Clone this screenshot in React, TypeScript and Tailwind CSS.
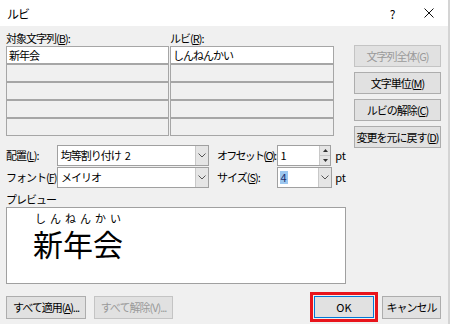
import React from "react";

function U({ c }: { c: string }) {
  return <span className="underline underline-offset-[1px]">{c}</span>;
}

function Btn({
  children,
  disabled,
  className = "",
}: {
  children: React.ReactNode;
  disabled?: boolean;
  className?: string;
}) {
  return (
    <div
      className={`h-[22px] flex items-center justify-center border whitespace-nowrap ${
        disabled
          ? "border-[#c4c4c4] bg-[#e1e1e1] text-[#9a9a9a]"
          : "border-[#adadad] bg-[#e1e1e1] text-black"
      } ${className}`}
    >
      {children}
    </div>
  );
}

function Chevron() {
  return (
    <svg width="8" height="5" viewBox="0 0 8 5">
      <polyline points="0.5,0.5 4,4 7.5,0.5" fill="none" stroke="#555" strokeWidth="1" />
    </svg>
  );
}

function Select({ children, w }: { children: React.ReactNode; w: string }) {
  return (
    <div className={`${w} h-[21px] flex items-stretch border border-[#a0a0a0] bg-white`}>
      <div className="flex-1 flex items-center pl-[3px]">{children}</div>
      <div className="w-[13px] flex items-center justify-center bg-[#e5e5e5] border-l border-[#c8c8c8]">
        <Chevron />
      </div>
    </div>
  );
}

export default function App() {
  const rowsL = ["新年会", "", "", "", ""];
  const rowsR = ["しんねんかい", "", "", "", ""];
  return (
    <div className="w-[450px] h-[324px] bg-[#f0f0f0] flex flex-col overflow-hidden border-r-2 border-[#d4d4d4] font-['Noto_Sans_CJK_JP',sans-serif] text-[11px] leading-[15px] tracking-[-1px] whitespace-nowrap text-black">
      {/* title bar */}
      <div className="h-[26px] bg-white flex items-center pl-[7px] shrink-0">
        <span className="text-[12px]">ルビ</span>
        <span className="ml-auto text-[12px] w-[10px] mr-[27px] text-center">?</span>
        <svg width="10" height="10" viewBox="0 0 10 10" className="mr-[14px]">
          <path d="M0.5 0.5 L9.5 9.5 M9.5 0.5 L0.5 9.5" stroke="#111" strokeWidth="1" />
        </svg>
      </div>

      {/* body */}
      <div className="flex px-[6px]">
        <div className="w-[340px] flex flex-col">
          <div className="mt-[5px] h-[15px] flex">
            <div className="w-[164px]">
              対象文字列(<U c="B" />):
            </div>
            <div>
              ルビ(<U c="R" />):
            </div>
          </div>
          <div className="grid grid-cols-[163px_164px] gap-x-[1px] w-[328px]">
            {rowsL.map((l, i) => (
              <React.Fragment key={i}>
                <div
                  className={`h-[18px] border border-[#a6a6a6] flex items-center pl-[2px] ${
                    i === 0 ? "bg-white" : "bg-[#f0f0f0]"
                  }`}
                >
                  {l}
                </div>
                <div
                  className={`h-[18px] border border-[#a6a6a6] flex items-center pl-[2px] ${
                    i === 0 ? "bg-white" : "bg-[#f0f0f0]"
                  }`}
                >
                  {rowsR[i]}
                </div>
              </React.Fragment>
            ))}
          </div>

          {/* controls */}
          <div className="mt-[9px] flex items-center h-[21px]">
            <div className="w-[51px]">
              配置(<U c="L" />):
            </div>
            <Select w="w-[153px]">
              均等割り付け<span className="ml-[4px]">2</span>
            </Select>
            <div className="ml-[8px] w-[60px] overflow-hidden tracking-[-1.7px]">
              オフセット(<U c="O" />):
            </div>
            <div className="w-[55px] h-[21px] flex items-stretch border border-[#a0a0a0] bg-white">
              <div className="flex-1 flex items-center pl-[3px]">1</div>
              <div className="w-[11px] flex flex-col border-l border-[#c8c8c8] bg-[#e5e5e5]">
                <div className="flex-1 flex items-center justify-center border-b border-[#c8c8c8]">
                  <svg width="5" height="3" viewBox="0 0 5 3">
                    <polygon points="0,3 2.5,0 5,3" fill="#333" />
                  </svg>
                </div>
                <div className="flex-1 flex items-center justify-center">
                  <svg width="5" height="3" viewBox="0 0 5 3">
                    <polygon points="0,0 2.5,3 5,0" fill="#333" />
                  </svg>
                </div>
              </div>
            </div>
            <div className="ml-[4px] tracking-normal">pt</div>
          </div>
          <div className="mt-[1px] flex items-center h-[21px]">
            <div className="w-[51px]">
              フォント(<U c="F" />):
            </div>
            <Select w="w-[153px]">メイリオ</Select>
            <div className="ml-[8px] w-[60px]">
              サイズ(<U c="S" />):
            </div>
            <div className="w-[56px] h-[21px] flex items-stretch border border-[#a0a0a0] bg-white">
              <div className="flex-1 flex items-center pl-[2px]">
                <span className="bg-[#9cc7f0] text-[#1a2a6a] px-[1px] leading-[13px] tracking-normal">4</span>
              </div>
              <div className="w-[13px] flex items-center justify-center bg-[#e5e5e5] border-l border-[#c8c8c8]">
                <Chevron />
              </div>
            </div>
            <div className="ml-[3px] tracking-normal">pt</div>
          </div>

          <div className="mt-[4px] h-[15px]">プレビュー</div>
          <div className="h-[77px] bg-white border border-[#a0a0a0] pl-[26px] pt-[3px] tracking-normal">
            <div className="inline-flex flex-col w-[90px]">
              <div className="flex justify-between px-[2px] text-[11px] leading-[13px]">
                <span>し</span>
                <span>ん</span>
                <span>ね</span>
                <span>ん</span>
                <span>か</span>
                <span>い</span>
              </div>
              <div className="text-[30px] leading-[36px] whitespace-nowrap">新年会</div>
            </div>
          </div>
        </div>

        <div className="ml-[8px] mt-[19px] w-[87px] flex flex-col gap-[5px]">
          <Btn disabled>文字列全体(G)</Btn>
          <Btn>
            文字単位(<U c="M" />)
          </Btn>
          <Btn>
            ルビの解除(<U c="C" />)
          </Btn>
          <Btn>
            変更を元に戻す(<U c="D" />)
          </Btn>
        </div>
      </div>

      {/* bottom */}
      <div className="flex items-center px-[6px] mt-[8px]">
        <Btn className="w-[80px] h-[23px]">
          すべて適用(<U c="A" />)...
        </Btn>
        <Btn disabled className="w-[79px] ml-[8px] h-[23px]">
          すべて解除(V)...
        </Btn>
        <div className="ml-auto border-[3px] border-[#e8141c] p-[1px]">
          <div className="w-[60px] h-[22px] flex items-center justify-center border border-[#0078d7] bg-[#e1e1e1] tracking-normal">
            OK
          </div>
        </div>
        <Btn className="w-[59px] ml-[4px] mr-[1px] h-[23px]">キャンセル</Btn>
      </div>
    </div>
  );
}
